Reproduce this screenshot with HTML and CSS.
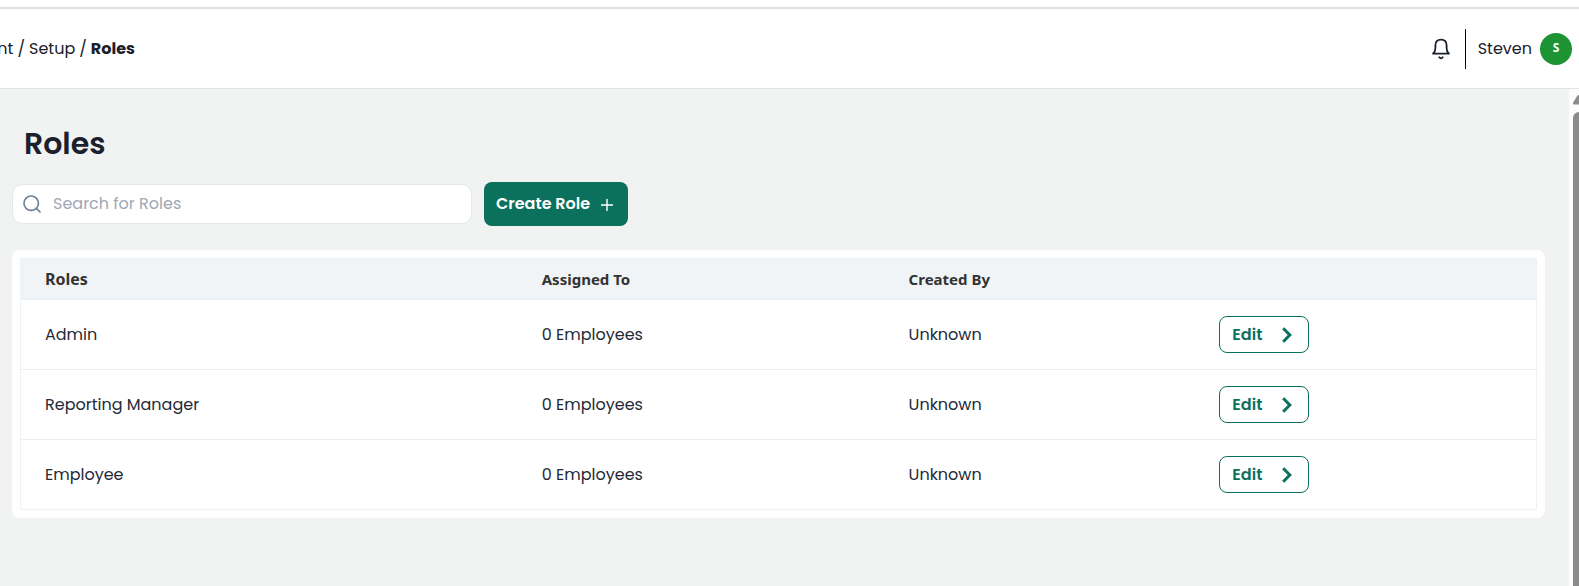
FILE: index.html
```html
<!DOCTYPE html>
<html lang="en">
<head>
<meta charset="utf-8">
<meta name="viewport" content="width=device-width, initial-scale=1">
<title>Roles</title>
<link rel="stylesheet" href="styles.css">
</head>
<body>
<header class="topbar">
  <nav class="crumbs" aria-label="Breadcrumb"><a href="#">nt</a><span>/</span><a href="#">Setup</a><span>/</span><a href="#" class="current" aria-current="page">Roles</a></nav>
  <div class="account">
    <button class="bell" type="button" aria-label="Notifications">
      <svg width="20" height="22" viewBox="0 0 20 22" fill="none" stroke="#1a202c" stroke-width="1.8" stroke-linecap="round" stroke-linejoin="round"><path d="M2 15.6h16c-1.8-1.5-2.4-3.3-2.4-5.600V7.300C15.600 3.900 13.500 1.700 10 1.700S4.400 3.900 4.400 7.300V10C4.400 12.300 3.800 14.100 2 15.600Z"/><path d="M8.300 19.200c.9 1.400 2.500 1.400 3.400 0"/></svg>
    </button>
    <button class="profile" type="button"><span>Steven</span><span class="avatar">S</span></button>
  </div>
</header>
<div class="body">
  <main class="content">
    <h1 class="title">Roles</h1>
    <div class="tools">
      <label class="search">
        <svg width="18" height="18" viewBox="0 0 18 18" fill="none" stroke="#718096" stroke-width="1.7" stroke-linecap="round"><circle cx="8.200" cy="8.200" r="7.200"/><path d="M13.400 13.400 17 17"/></svg>
        <input type="search" placeholder="Search for Roles" aria-label="Search for Roles">
      </label>
      <button class="create" type="button">Create Role
        <svg width="12" height="14" viewBox="0 0 12 14" stroke="#fff" stroke-width="1.4"><path d="M6 2v12M0 8h12"/></svg>
      </button>
    </div>
    <section class="card">
      <table class="roles">
        <colgroup><col class="col-role"><col class="col-assigned"><col class="col-created"><col></colgroup>
        <thead>
          <tr><th class="lead" scope="col">Roles</th><th scope="col">Assigned To</th><th scope="col">Created By</th><th></th></tr>
        </thead>
        <tbody>
          <tr><td>Admin</td><td>0 Employees</td><td>Unknown</td><td><button class="edit" type="button">Edit <svg width="10" height="16" viewBox="0 0 10 16" fill="none" stroke="currentColor" stroke-width="3"><path d="m1.200 1.300 6.600 6.700-6.600 6.700"/></svg></button></td></tr>
          <tr><td>Reporting Manager</td><td>0 Employees</td><td>Unknown</td><td><button class="edit" type="button">Edit <svg width="10" height="16" viewBox="0 0 10 16" fill="none" stroke="currentColor" stroke-width="3"><path d="m1.200 1.300 6.600 6.700-6.600 6.700"/></svg></button></td></tr>
          <tr><td>Employee</td><td>0 Employees</td><td>Unknown</td><td><button class="edit" type="button">Edit <svg width="10" height="16" viewBox="0 0 10 16" fill="none" stroke="currentColor" stroke-width="3"><path d="m1.200 1.300 6.600 6.700-6.600 6.700"/></svg></button></td></tr>
        </tbody>
      </table>
    </section>
  </main>
  <div class="scrollbar" aria-hidden="true">
    <svg class="arrow" width="6" height="10" viewBox="0 0 6 10" fill="#8b8b8b"><path d="M6 0C5 0 4.500.5 4 1.200L.3 7.200C-.4 8.500.2 9.500 1.500 9.500H6Z"/></svg>
    <div class="thumb"></div>
  </div>
</div>
</body>
</html>
```

FILE: styles.css
```css
* { box-sizing: border-box; }
body {
  margin: 0;
  min-height: 100vh;
  display: flex;
  flex-direction: column;
  padding-top: 7px;
  background: #fff;
  color: #1a202c;
  font: 16px/24px Poppins, Inter, sans-serif;
}
button, input { font: inherit; color: inherit; }
button { border: 0; background: none; padding: 0; cursor: pointer; }
a { color: inherit; text-decoration: none; }
svg { display: block; flex: none; }

.topbar {
  height: 82px;
  display: flex;
  align-items: center;
  justify-content: space-between;
  border-top: 2px solid #e0e0e0;
  border-bottom: 1px solid #e2e4e6;
  padding-right: 7px;
}
.crumbs {
  width: 135px;
  display: flex;
  justify-content: flex-end;
  gap: 4px;
  overflow: hidden;
}
.current { font-weight: 700; }
.account { display: flex; align-items: center; gap: 14px; }
.profile {
  display: flex;
  align-items: center;
  gap: 8px;
  height: 40px;
  padding-left: 12px;
  border-left: 1px solid #000;
}
.avatar {
  width: 32px;
  height: 32px;
  border-radius: 50%;
  background: #1c9433;
  color: #fff;
  font: 700 12px/30px "Noto Sans", sans-serif;
  text-align: center;
}

.body { flex: 1; display: flex; background: #f1f3f3; }
.content { flex: 1; padding: 36px 24px 24px 12px; }
.title { margin: 0 0 20px 12px; font-size: 30px; line-height: 37px; font-weight: 600; }
.tools { display: flex; align-items: center; gap: 12px; margin-bottom: 24px; }
.search {
  flex: 0 1 460px;
  display: flex;
  align-items: center;
  gap: 12px;
  height: 40px;
  padding: 0 10px;
  border: 1px solid #e2e8f0;
  border-radius: 10px;
  background: #fff;
}
.search input { flex: 1; min-width: 0; border: 0; padding: 0; outline: 0; background: none; }
.search input::placeholder { color: #a0a7b5; opacity: 1; }
.create {
  display: flex;
  align-items: center;
  justify-content: space-between;
  gap: 11px;
  min-width: 144px;
  height: 44px;
  padding: 0 15px 0 12px;
  border-radius: 8px;
  background: #0b705c;
  color: #fff;
  font-weight: 600;
}

.card { padding: 8px; border-radius: 8px; background: #fff; }
.roles { width: 100%; table-layout: fixed; border-collapse: collapse; border: 1px solid #edf2f7; }
.col-role { width: 32.8%; }
.col-assigned { width: 24.2%; }
.col-created { width: 20.5%; }
.roles th {
  height: 41px;
  padding: 0 24px;
  background: #f0f4f7;
  color: #333;
  text-align: left;
  font: 700 15px/20px "Noto Sans", sans-serif;
}
.roles .lead { font-size: 16px; }
.roles td { height: 70px; padding: 0 24px; border-top: 1px solid #eceff1; color: #242a37; }
.edit {
  display: flex;
  align-items: center;
  justify-content: space-between;
  width: 90px;
  height: 37px;
  padding: 0 16px 0 12px;
  border: 1px solid #0b705c;
  border-radius: 8px;
  color: #0b705c;
  font-weight: 600;
}

.scrollbar { width: 10px; display: flex; flex-direction: column; align-items: flex-end; gap: 7px; padding-top: 6px; background: #fcfcfc; }
.thumb { flex: 1; width: 6px; border-radius: 6px 0 0; background: #8b8b8b; }
```
